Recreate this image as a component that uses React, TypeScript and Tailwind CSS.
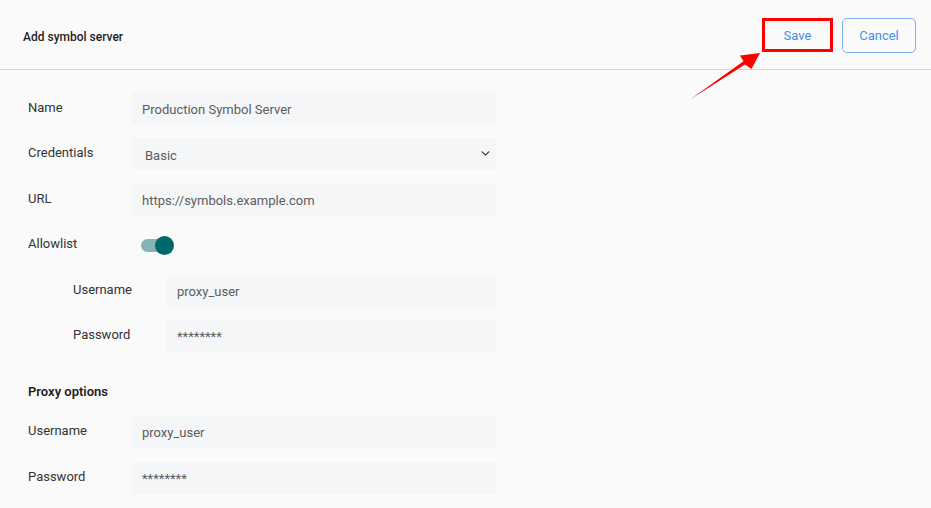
import { ChevronDown } from 'lucide-react';

type FieldProps = {
  label: string;
  value: string;
  nested?: boolean;
  select?: boolean;
};

function Field({ label, value, nested, select }: FieldProps) {
  return (
    <div className={nested ? 'flex h-8 items-center pl-[45px]' : 'flex h-8 items-center'}>
      <div className={nested ? 'w-[94px] -mt-[3px] text-[13px] text-[#333]' : 'w-[104px] -mt-[3px] text-[13px] text-[#333]'}>
        {label}
      </div>
      <div
        className={
          nested
            ? 'flex h-8 w-[329px] items-center justify-between bg-[#f5f6f8] px-[10px] text-[13px] text-[#5a5d61]'
            : 'flex h-8 w-[364px] items-center justify-between bg-[#f5f6f8] px-[10px] text-[13px] text-[#5a5d61]'
        }
      >
        <span className={select ? 'pl-[3px] pt-[3px]' : 'pt-[2px]'}>{value}</span>
        {select && <ChevronDown size={13} strokeWidth={2.6} className="-mr-[6px] -mt-[2px] text-[#444]" />}
      </div>
    </div>
  );
}

export default function App() {
  return (
    <div className="relative min-h-[508px] w-full bg-[#fafafa] font-['Roboto',sans-serif]">
      <header className="flex h-[70px] items-center justify-between border-b border-[#d4d6d9] pl-[23px] pr-[15px]">
        <h1 className="pt-[5px] text-[12px] font-medium text-[#1f1f1f]">Add symbol server</h1>
        <div className="flex items-center gap-[9px] pt-px">
          <button className="flex h-[34px] w-[71px] items-center justify-center border-[3px] border-[#ff0000] pt-px text-[13px] text-[#4a8ee6]">
            Save
          </button>
          <button className="flex h-[35px] w-[74px] items-center justify-center rounded-[5px] border border-[#7db0ee] pt-px text-[13px] text-[#4a8ee6]">
            Cancel
          </button>
        </div>
      </header>

      <form className="flex flex-col pl-[28px] pt-[23px]">
        <Field label="Name" value="Production Symbol Server" />
        <div className="mt-[13px]">
          <Field label="Credentials" value="Basic" select />
        </div>
        <div className="mt-[14px]">
          <Field label="URL" value="https://symbols.example.com" />
        </div>
        <div className="mt-[13px] flex h-8 items-center">
          <div className="w-[113px] -mt-[3px] text-[13px] text-[#333]">Allowlist</div>
          <div className="relative h-[19px] w-[33px]">
            <div className="absolute left-0 top-[3px] h-[13px] w-[28px] rounded-full bg-[#86b3b1]" />
            <div className="absolute left-[14px] top-0 h-[19px] w-[19px] rounded-full bg-[#00686a]" />
          </div>
        </div>
        <div className="mt-[14px]">
          <Field label="Username" value="proxy_user" nested />
        </div>
        <div className="mt-[13px]">
          <Field label="Password" value="********" nested />
        </div>

        <h2 className="mt-[30px] h-5 text-[13px] font-semibold leading-5 text-[#1f1f1f]">Proxy options</h2>

        <div className="mt-[14px]">
          <Field label="Username" value="proxy_user" />
        </div>
        <div className="mt-[14px]">
          <Field label="Password" value="********" />
        </div>
      </form>

      {/* pointer toward the Save button */}
      <svg className="pointer-events-none absolute left-[680px] top-[45px] h-[65px] w-[90px]" viewBox="0 0 90 65">
        <polygon points="10,54.5 65,19.5 71.5,24 80,8 60,10.5 63.5,16.3" fill="#ff0000" />
      </svg>
    </div>
  );
}
